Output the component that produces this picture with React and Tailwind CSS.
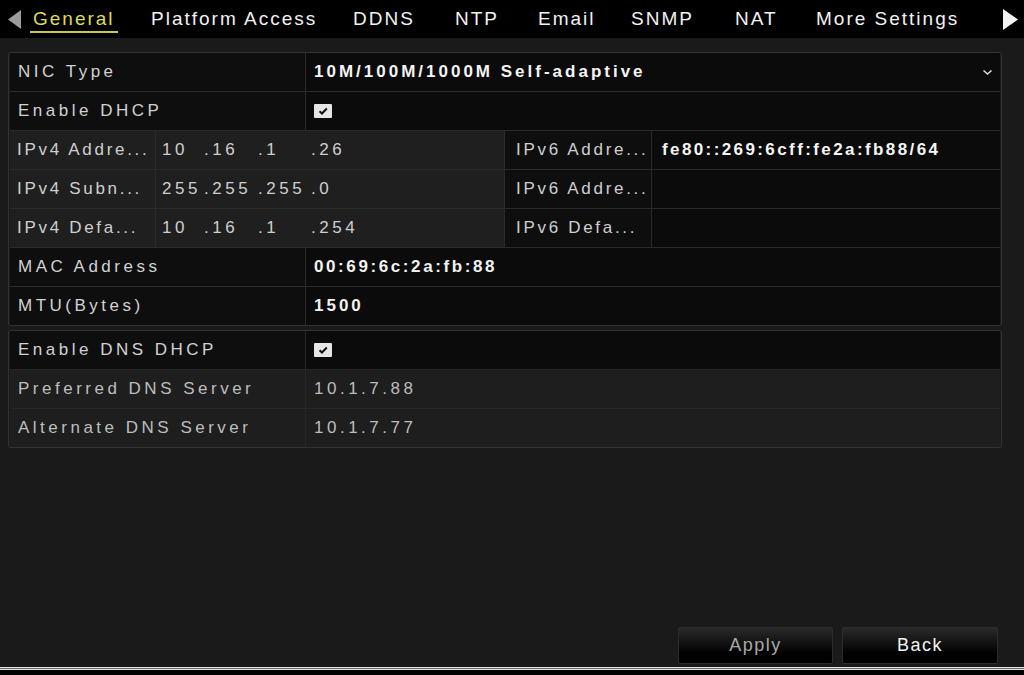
import React from 'react';

const font = { fontFamily: '"Liberation Sans", Arial, sans-serif' };

const tabs = [
  { t: 'General', w: 'w-[118px]' },
  { t: 'Platform Access', w: 'w-[202px]' },
  { t: 'DDNS', w: 'w-[102px]' },
  { t: 'NTP', w: 'w-[83px]' },
  { t: 'Email', w: 'w-[93px]' },
  { t: 'SNMP', w: 'w-[104px]' },
  { t: 'NAT', w: 'w-[81px]' },
  { t: 'More Settings', w: 'w-[160px]' },
];

const Check = () => (
  <div className="w-[18px] h-[14px] bg-[#e6e6e6] rounded-[1px] flex items-center justify-center">
    <svg width="10" height="8" viewBox="0 0 10 8">
      <path d="M1.5 4.2 L4 6.5 L8.8 1.5" stroke="#111" strokeWidth="2" fill="none" />
    </svg>
  </div>
);

const Ip = ({ parts }) => (
  <div className="flex">
    <span className="w-[42px]">{parts[0]}</span>
    <span className="w-[54px]">{parts[1]}</span>
    <span className="w-[53px]">{parts[2]}</span>
    <span>{parts[3]}</span>
  </div>
);

const cell = 'h-[38px] flex items-center text-[17px] whitespace-nowrap';

const Row = ({ label, children, gray }) => (
  <div className="grid grid-cols-[295px_1fr] gap-px">
    <div className={`${cell} pl-[8px] tracking-[3.5px] ${gray ? 'bg-[#1e1e1e] text-[#bdbdbd]' : 'bg-[#0e0e0e] text-[#d2d2d2]'}`}>{label}</div>
    <div className={`${cell} pl-[8px] ${gray ? 'bg-[#1e1e1e] text-[#bdbdbd] tracking-[3.5px]' : 'bg-[#0b0b0b] text-[#f2f2f2]'}`}>{children}</div>
  </div>
);

const IpRow = ({ l4, v4, l6, v6 }) => (
  <div className="grid grid-cols-[145px_348px_146px_1fr] gap-px">
    <div className={`${cell} pl-[7px] tracking-[2.7px] bg-[#1f1f1f] text-[#cfcfcf]`}>{l4}</div>
    <div className={`${cell} pl-[6px] tracking-[3.5px] bg-[#1f1f1f] text-[#cfcfcf]`}>
      <Ip parts={v4} />
    </div>
    <div className={`${cell} pl-[11px] tracking-[2.7px] bg-[#0e0e0e] text-[#cfcfcf]`}>{l6}</div>
    <div className={`${cell} pl-[10px] bg-[#0b0b0b] text-[#f5f5f5] font-bold tracking-[2.4px]`}>{v6}</div>
  </div>
);

export default function App() {
  return (
    <div style={font} className="w-full h-[675px] bg-black overflow-hidden flex flex-col">
      {/* tab bar */}
      <div className="h-[38px] bg-black flex items-start shrink-0">
        <svg className="ml-[8px] mt-[10px]" width="14" height="19" viewBox="0 0 14 19">
          <path d="M13 0 L13 19 L0 9.5 Z" fill="#9c9c9c" />
        </svg>
        <div className="flex ml-[8px]">
          {tabs.map((tab, i) => (
            <div key={tab.t} className={`${tab.w} flex`}>
              <div
                className={`pt-[8px] pb-[2px] px-[3px] leading-[21px] text-[19px] tracking-[2px] border-b-2 whitespace-nowrap ${
                  i === 0 ? 'text-[#dcdc5c] border-[#c9c94e]' : 'text-[#f2f2f2] border-transparent'
                }`}
              >
                {tab.t}
              </div>
            </div>
          ))}
        </div>
        <svg className="ml-auto mr-[6px] mt-[9px]" width="15" height="21" viewBox="0 0 15 21">
          <path d="M0 0 L0 21 L15 10.5 Z" fill="#f4f4f4" />
        </svg>
      </div>

      {/* content */}
      <div className="h-[629px] bg-[#1a1a1a] flex flex-col justify-between shrink-0">
        <div className="pt-[14px] pl-[8px] w-[1002px]">
          <div className="border border-[#333] rounded-[3px] px-px bg-[#1a1a1a]">
            <div className="flex flex-col gap-px bg-[#2a2a2a]">
              <div className="grid grid-cols-[295px_1fr] gap-px">
                <div className={`${cell} pl-[8px] tracking-[3.5px] bg-[#0e0e0e] text-[#d2d2d2]`}>NIC Type</div>
                <div className={`${cell} pl-[8px] pr-[8px] bg-[#0b0b0b] text-[#f4f4f4] justify-between`}>
                  <span className="font-bold tracking-[3px]">10M/100M/1000M Self-adaptive</span>
                  <svg width="9" height="5" viewBox="0 0 9 5">
                    <path d="M0.5 0.5 L4.5 4 L8.5 0.5" stroke="#ddd" strokeWidth="1.5" fill="none" />
                  </svg>
                </div>
              </div>
              <Row label="Enable DHCP"><Check /></Row>
              <IpRow l4="IPv4 Addre..." v4={['10', '.16', '.1', '.26']} l6="IPv6 Addre..." v6="fe80::269:6cff:fe2a:fb88/64" />
              <IpRow l4="IPv4 Subn..." v4={['255', '.255', '.255', '.0']} l6="IPv6 Addre..." v6="" />
              <IpRow l4="IPv4 Defa..." v4={['10', '.16', '.1', '.254']} l6="IPv6 Defa..." v6="" />
              <Row label="MAC Address"><span className="font-bold tracking-[2.6px]">00:69:6c:2a:fb:88</span></Row>
              <Row label="MTU(Bytes)"><span className="font-bold tracking-[3px]">1500</span></Row>
            </div>
          </div>

          <div className="mt-[4px] border border-[#333] rounded-[3px] px-px bg-[#1a1a1a]">
            <div className="flex flex-col gap-px bg-[#262626]">
              <Row label="Enable DNS DHCP"><Check /></Row>
              <Row label="Preferred DNS Server" gray>10.1.7.88</Row>
              <Row label="Alternate DNS Server" gray>10.1.7.77</Row>
            </div>
          </div>
        </div>

        <div className="flex justify-end gap-[9px] pr-[26px] pb-[3px]">
          <button className="w-[155px] h-[37px] rounded-[2px] border border-[#2c2c2c] bg-gradient-to-b from-[#2a2a2a] via-[#0e0e0e] to-black text-[18px] tracking-[1.5px] text-[#a9a9a9]">
            Apply
          </button>
          <button className="w-[156px] h-[37px] rounded-[2px] border border-[#2c2c2c] bg-gradient-to-b from-[#2a2a2a] via-[#0e0e0e] to-black text-[18px] tracking-[1.5px] text-[#f2f2f2]">
            Back
          </button>
        </div>
      </div>

      {/* bottom edge */}
      <div className="h-px bg-[#e4e4e4] shrink-0" />
      <div className="h-px bg-[#6a6a6a] shrink-0" />
      <div className="h-px bg-[#e4e4e4] shrink-0" />
      <div className="flex-1 bg-black" />
    </div>
  );
}
